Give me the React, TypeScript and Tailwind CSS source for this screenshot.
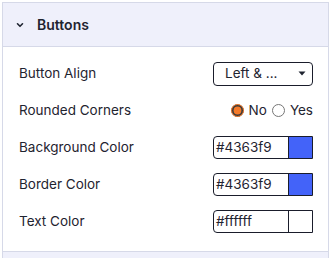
import { useState } from "react";

type RowProps = {
  label: string;
  children: React.ReactNode;
};

const Row = ({ label, children }: RowProps) => {
  return (
    <div className="flex items-center justify-between h-[37px]">
      <span className="text-[13.5px] text-[#1f2430]">{label}</span>
      {children}
    </div>
  );
};

const ColorInput = ({ value }: { value: string }) => {
  return (
    <div className="flex w-[100px] h-[23px] border border-[#1a1d2b] rounded-l-[4px] overflow-hidden">
      <span className="flex-1 flex items-center pl-[2px] text-[13.5px] text-[#1f2430] leading-none">
        {value}
      </span>
      <span
        className="w-[24px] h-full border-l border-[#1a1d2b]"
        style={{ backgroundColor: value }}
      />
    </div>
  );
};

const App = () => {
  const [rounded, setRounded] = useState("no");

  return (
    <div className="w-[332px] h-[258px] bg-white pt-[2px] pl-[2px]" style={{ fontFamily: "Inter, 'Noto Sans', sans-serif" }}>
      <div className="w-[327px] border-l border-r border-t border-[#d6d9e8]">
        <div className="flex items-center h-[44px] bg-[#eff0fb] border-b border-[#d6d9e8] pl-[12px]">
          <svg width="10" height="10" viewBox="0 0 10 10" className="mr-[12px]">
            <path d="M2.5 3.8 L5 6.3 L7.5 3.8" fill="none" stroke="#1f2430" strokeWidth="1.6" strokeLinecap="round" strokeLinejoin="round" />
          </svg>
          <span className="text-[14px] font-semibold text-[#1f2430]">Buttons</span>
        </div>

        <div className="pl-[16px] pr-[15px] pt-[8px] pb-[11px] border-b border-[#d6d9e8]">
          <Row label="Button Align">
            <div className="flex items-center justify-between w-[100px] h-[24px] border border-[#1a1d2b] rounded-[4px] pl-[11px] pr-[6px]">
              <span className="text-[13.5px] text-[#1f2430]">Left &amp; ...</span>
              <svg width="8" height="5" viewBox="0 0 8 5">
                <path d="M0.5 0.5 L7.5 0.5 L4 4.5 Z" fill="#1f2430" />
              </svg>
            </div>
          </Row>
          <Row label="Rounded Corners">
            <div className="flex items-center gap-[5px] text-[13.5px] text-[#1f2430]">
              <label className="flex items-center gap-[5px]">
                <input
                  type="radio"
                  name="rounded"
                  checked={rounded === "no"}
                  onChange={() => setRounded("no")}
                  className="m-0 w-[13px] h-[13px] accent-[#f47a2a]"
                />
                No
              </label>
              <label className="flex items-center gap-[5px]">
                <input
                  type="radio"
                  name="rounded"
                  checked={rounded === "yes"}
                  onChange={() => setRounded("yes")}
                  className="m-0 w-[13px] h-[13px] accent-[#f47a2a]"
                />
                Yes
              </label>
            </div>
          </Row>
          <Row label="Background Color">
            <ColorInput value="#4363f9" />
          </Row>
          <Row label="Border Color">
            <ColorInput value="#4363f9" />
          </Row>
          <Row label="Text Color">
            <ColorInput value="#ffffff" />
          </Row>
        </div>
        <div className="h-[10px] bg-[#eff0fb]" />
      </div>
    </div>
  );
};

export default App;
